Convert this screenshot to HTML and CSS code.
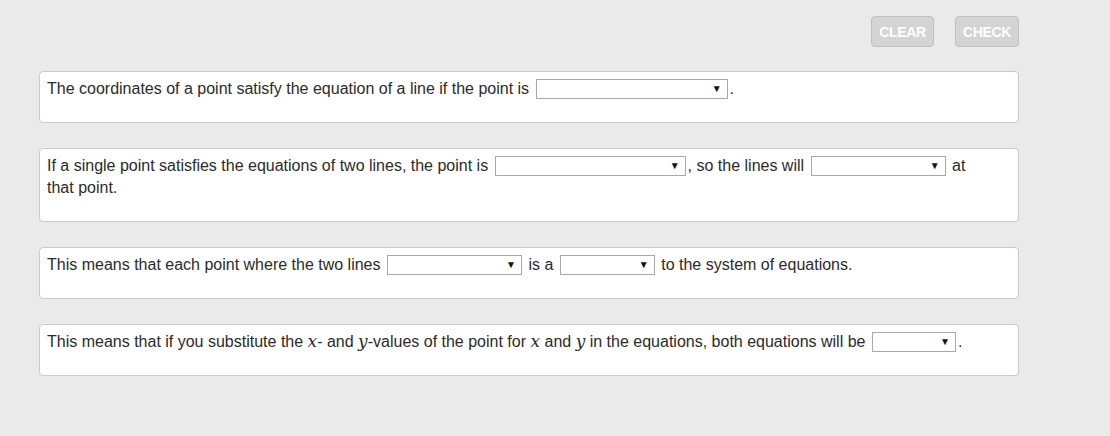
FILE: index.html
```html
<!DOCTYPE html>
<html>
<head>
<meta charset="utf-8">
<link rel="stylesheet" href="styles.css">
</head>
<body>
<div class="page">
  <div class="toolbar">
    <button class="btn">CLEAR</button>
    <button class="btn">CHECK</button>
  </div>
  <div class="questions">
    <div class="card">The coordinates of a point satisfy the equation of a line if the point is <span class="sel w192"><span class="arrow">▼</span></span>.</div>
    <div class="card">If a single point satisfies the equations of two lines, the point is <span class="sel w191"><span class="arrow">▼</span></span>, so the lines will <span class="sel w135"><span class="arrow">▼</span></span> at<br>that point.</div>
    <div class="card">This means that each point where the two lines <span class="sel w135"><span class="arrow">▼</span></span> is a <span class="sel w95"><span class="arrow">▼</span></span> to the system of equations.</div>
    <div class="card">This means that if you substitute the <i class="m">x</i>- and <i class="m">y</i>-values of the point for <i class="m">x</i> and <i class="m">y</i> in the equations, both equations will be <span class="sel w84"><span class="arrow">▼</span></span>.</div>
  </div>
</div>
</body>
</html>
```
FILE: styles.css
```css
html, body {
  margin: 0;
  padding: 0;
}
body {
  background: #eaeaea;
  font-family: "Liberation Sans", Arial, sans-serif;
  width: 1110px;
  height: 436px;
  overflow: hidden;
}
.page {
  padding: 16px 0 0 39px;
  width: 980px;
}
.toolbar {
  display: flex;
  justify-content: flex-end;
  gap: 21px;
  height: 31px;
}
.btn {
  background: #d4d4d4;
  border: 1px solid #c0c0c0;
  border-radius: 4px;
  color: #fff;
  font-family: "Liberation Sans", Arial, sans-serif;
  font-weight: bold;
  font-size: 14px;
  padding: 0;
  height: 31px;
  width: 63px;
  letter-spacing: -0.3px;
}
.btn + .btn {
  width: 64px;
}
.questions {
  margin-top: 24px;
  display: flex;
  flex-direction: column;
  gap: 25px;
}
.card {
  background: #fff;
  border: 1px solid #cacaca;
  border-radius: 4px;
  padding: 6px 7px 22px 7px;
  font-size: 16px;
  line-height: 22px;
  color: #2b2b2b;
}
.sel {
  display: inline-block;
  position: relative;
  height: 18px;
  border: 1px solid #a9a9a9;
  background: #fff;
  vertical-align: -5px;
  margin: 0 2px;
  box-sizing: content-box;
}
.arrow {
  position: absolute;
  right: 5px;
  top: 0;
  font-size: 10px;
  line-height: 18px;
  color: #111;
}
.w192 { width: 190px; }
.w191 { width: 189px; }
.w135 { width: 133px; }
.w95 { width: 93px; }
.w84 { width: 82px; }
.m {
  font-family: "DejaVu Serif", "Liberation Serif", serif;
  font-style: italic;
  font-size: 17px;
  line-height: 16px;
}
```
